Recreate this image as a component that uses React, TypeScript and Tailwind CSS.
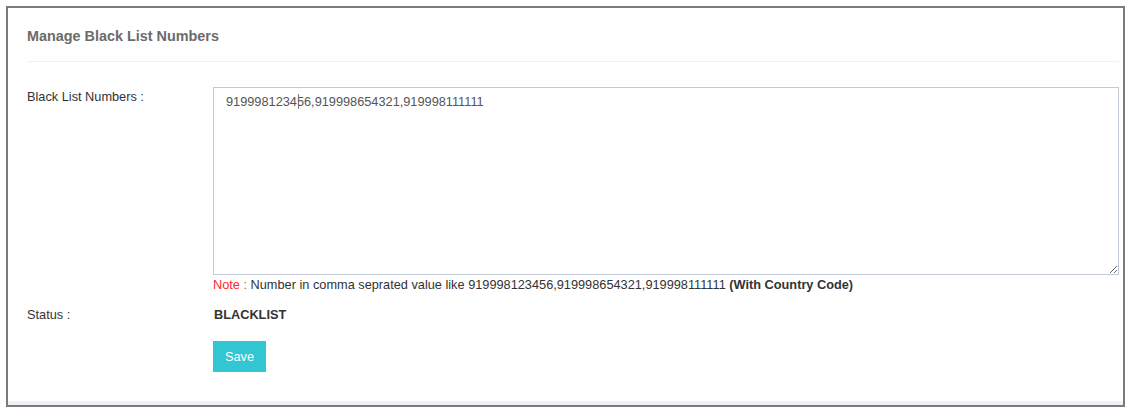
import React, { useState } from 'react';

const App: React.FC = () => {
  const [numbers, setNumbers] = useState('919998123456,919998654321,919998111111');

  return (
    <div className="w-[1131px] h-[413px] bg-white p-[6px] font-['Liberation_Sans',Arial,sans-serif]">
      <div className="h-full border-2 border-[#7b7b7b] flex flex-col">
        <div className="flex-1 bg-white pl-[19px] pr-[4px]">
          {/* Titulo del panel */}
          <div className="h-[54px] pt-[5px] flex items-center border-b border-[#eef1f5]">
            <h2 className="text-[14.4px] font-bold text-[#6b6b6b]">Manage Black List Numbers</h2>
          </div>

          <div className="pt-[25px]">
            {/* Numeros */}
            <div className="flex">
              <label className="w-[186px] shrink-0 pt-[1px] text-[12.75px] leading-[18px] text-[#333]">
                Black List Numbers :
              </label>
              <div className="flex-1">
                <div className="relative">
                  <textarea
                    value={numbers}
                    onChange={(e) => setNumbers(e.target.value)}
                    className="block w-full h-[188px] border border-[#c2cad8] px-[12px] py-[5px] text-[12.75px] leading-[17px] text-[#555] outline-none"
                  />
                  <span className="absolute left-[85px] top-[7px] h-[15px] w-px bg-[#777]" />
                </div>
                <p className="mt-[1px] text-[12.75px] leading-[17px] text-[#333]">
                  <span className="text-[#ff2a2a]">Note :</span> Number in comma seprated value like
                  919998123456,919998654321,919998111111 <b>(With Country Code)</b>
                </p>
              </div>
            </div>

            {/* Estado */}
            <div className="flex mt-[13px]">
              <span className="w-[187px] shrink-0 text-[12.75px] leading-[18px] text-[#333]">Status :</span>
              <span className="text-[12.75px] leading-[18px] font-bold text-[#333]">BLACKLIST</span>
            </div>

            <div className="pl-[186px] mt-[17px]">
              <button className="h-[31px] w-[53px] bg-[#32c5d2] text-white text-[12.75px]">Save</button>
            </div>
          </div>
        </div>
        <div className="h-[4px] bg-[#eef1f5]" />
      </div>
    </div>
  );
};

export default App;
